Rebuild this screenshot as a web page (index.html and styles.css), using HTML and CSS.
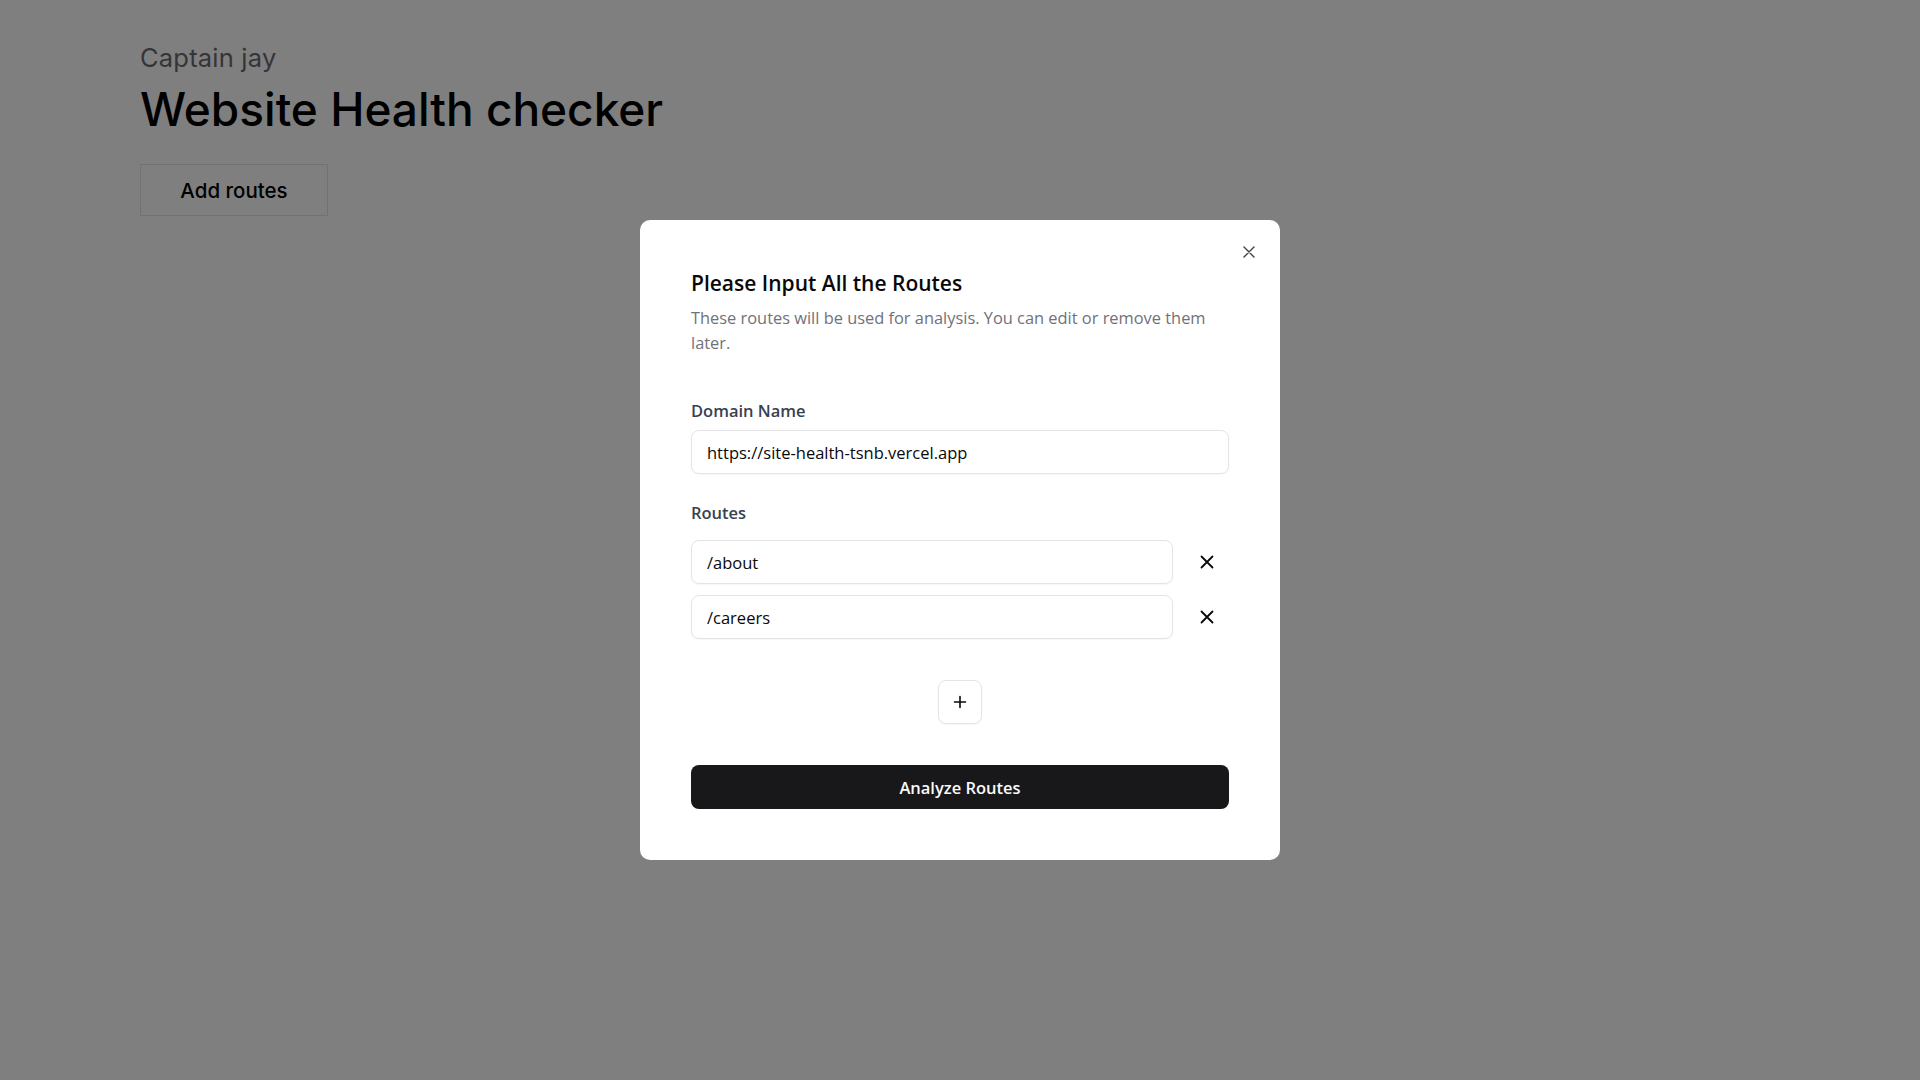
FILE: index.html
```html
<!DOCTYPE html>
<html lang="en">
<head>
<meta charset="utf-8">
<title>Website Health checker</title>
<link rel="stylesheet" href="styles.css">
</head>
<body>
<main class="page">
  <p class="owner">Captain jay</p>
  <h1 class="page-title">Website Health checker</h1>
  <button class="add-btn" type="button">Add routes</button>
</main>

<div class="overlay">
  <div class="modal" role="dialog">
    <button class="close-btn" type="button" aria-label="Close">
      <svg width="16" height="16" viewBox="0 0 16 16" fill="none" stroke="currentColor" stroke-width="1.4" stroke-linecap="round"><path d="M3 3l10 10M13 3l-10 10"/></svg>
    </button>
    <h2 class="modal-title">Please Input All the Routes</h2>
    <p class="modal-desc">These routes will be used for analysis. You can edit or remove them later.</p>

    <div class="field domain-field">
      <label class="label">Domain Name</label>
      <div class="input">https://site-health-tsnb.vercel.app</div>
    </div>

    <div class="field routes-field">
      <label class="label">Routes</label>
      <div class="route-list">
        <div class="route-row">
          <div class="input">/about</div>
          <button class="remove-btn" type="button" aria-label="Remove">
            <svg width="16" height="16" viewBox="0 0 16 16" fill="none" stroke="currentColor" stroke-width="1.8" stroke-linecap="round"><path d="M2.5 2.5l11 11M13.5 2.5l-11 11"/></svg>
          </button>
        </div>
        <div class="route-row">
          <div class="input">/careers</div>
          <button class="remove-btn" type="button" aria-label="Remove">
            <svg width="16" height="16" viewBox="0 0 16 16" fill="none" stroke="currentColor" stroke-width="1.8" stroke-linecap="round"><path d="M2.5 2.5l11 11M13.5 2.5l-11 11"/></svg>
          </button>
        </div>
      </div>
    </div>

    <div class="plus-wrap">
      <button class="plus-btn" type="button" aria-label="Add route">
        <svg width="16" height="16" viewBox="0 0 16 16" fill="none" stroke="currentColor" stroke-width="1.6" stroke-linecap="round"><path d="M8 2.5v11M2.5 8h11"/></svg>
      </button>
    </div>

    <button class="analyze-btn" type="button">Analyze Routes</button>
  </div>
</div>
</body>
</html>
```

FILE: styles.css
```css
* { box-sizing: border-box; }

html, body {
  margin: 0;
  padding: 0;
  background: #ffffff;
  height: 100%;
}

body {
  font-family: "Inter", "Liberation Sans", sans-serif;
  color: #000;
}

.page {
  padding: 42px 140px 0;
}

.owner {
  margin: 0;
  font-size: 25.5px;
  line-height: 32px;
  color: #6b6b70;
  letter-spacing: 0.2px;
}

.page-title {
  margin: 7px 0 0;
  font-size: 46px;
  line-height: 56px;
  font-weight: 500;
  color: #000;
}

.add-btn {
  margin-top: 27px;
  width: 188px;
  height: 52px;
  background: transparent;
  border: 1px solid #e5e5e5;
  font-family: "Inter", "Liberation Sans", sans-serif;
  font-size: 20.5px;
  font-weight: 500;
  color: #000;
}

.overlay {
  position: fixed;
  inset: 0;
  background: rgba(0, 0, 0, 0.5);
  display: flex;
  align-items: center;
  justify-content: center;
}

.modal {
  position: relative;
  width: 640px;
  background: #fff;
  border-radius: 10px;
  padding: 49px 51px 51px;
  font-family: "Open Sans", "Noto Sans", sans-serif;
  display: flex;
  flex-direction: column;
}

.close-btn {
  position: absolute;
  top: 20px;
  right: 19px;
  width: 24px;
  height: 24px;
  border: 0;
  background: transparent;
  padding: 0;
  display: flex;
  align-items: center;
  justify-content: center;
  color: #3f3f46;
}

.modal-title {
  margin: 0;
  font-size: 21px;
  line-height: 28px;
  font-weight: 600;
  color: #09090b;
}

.modal-desc {
  margin: 8px 0 0;
  font-size: 16.4px;
  line-height: 25px;
  color: #71717a;
}

.field {
  display: flex;
  flex-direction: column;
}

.domain-field { margin-top: 44px; }
.routes-field { margin-top: 27px; }

.label {
  font-size: 16.5px;
  line-height: 24px;
  font-weight: 600;
  color: #374151;
}

.input {
  margin-top: 7px;
  height: 44px;
  border: 1px solid #e4e4e7;
  border-radius: 8px;
  padding: 0 15px;
  display: flex;
  align-items: center;
  font-size: 16.5px;
  color: #09090b;
  box-shadow: 0 1px 2px rgba(0, 0, 0, 0.04);
}

.route-list {
  margin-top: 15px;
  display: flex;
  flex-direction: column;
  gap: 11px;
}

.route-row {
  display: flex;
  align-items: center;
  gap: 12px;
}

.route-row .input {
  margin-top: 0;
  flex: 1;
}

.remove-btn {
  width: 44px;
  height: 44px;
  border: 0;
  background: transparent;
  padding: 0;
  display: flex;
  align-items: center;
  justify-content: center;
  color: #09090b;
}

.plus-wrap {
  margin-top: 41px;
  display: flex;
  justify-content: center;
}

.plus-btn {
  width: 44px;
  height: 44px;
  border: 1px solid #e4e4e7;
  border-radius: 8px;
  background: #fff;
  padding: 0;
  display: flex;
  align-items: center;
  justify-content: center;
  color: #09090b;
  box-shadow: 0 1px 2px rgba(0, 0, 0, 0.04);
}

.analyze-btn {
  margin-top: 41px;
  height: 44px;
  width: 100%;
  border: 0;
  border-radius: 8px;
  background: #18181b;
  color: #fafafa;
  font-family: "Open Sans", "Noto Sans", sans-serif;
  font-size: 16.5px;
  font-weight: 600;
}
```
